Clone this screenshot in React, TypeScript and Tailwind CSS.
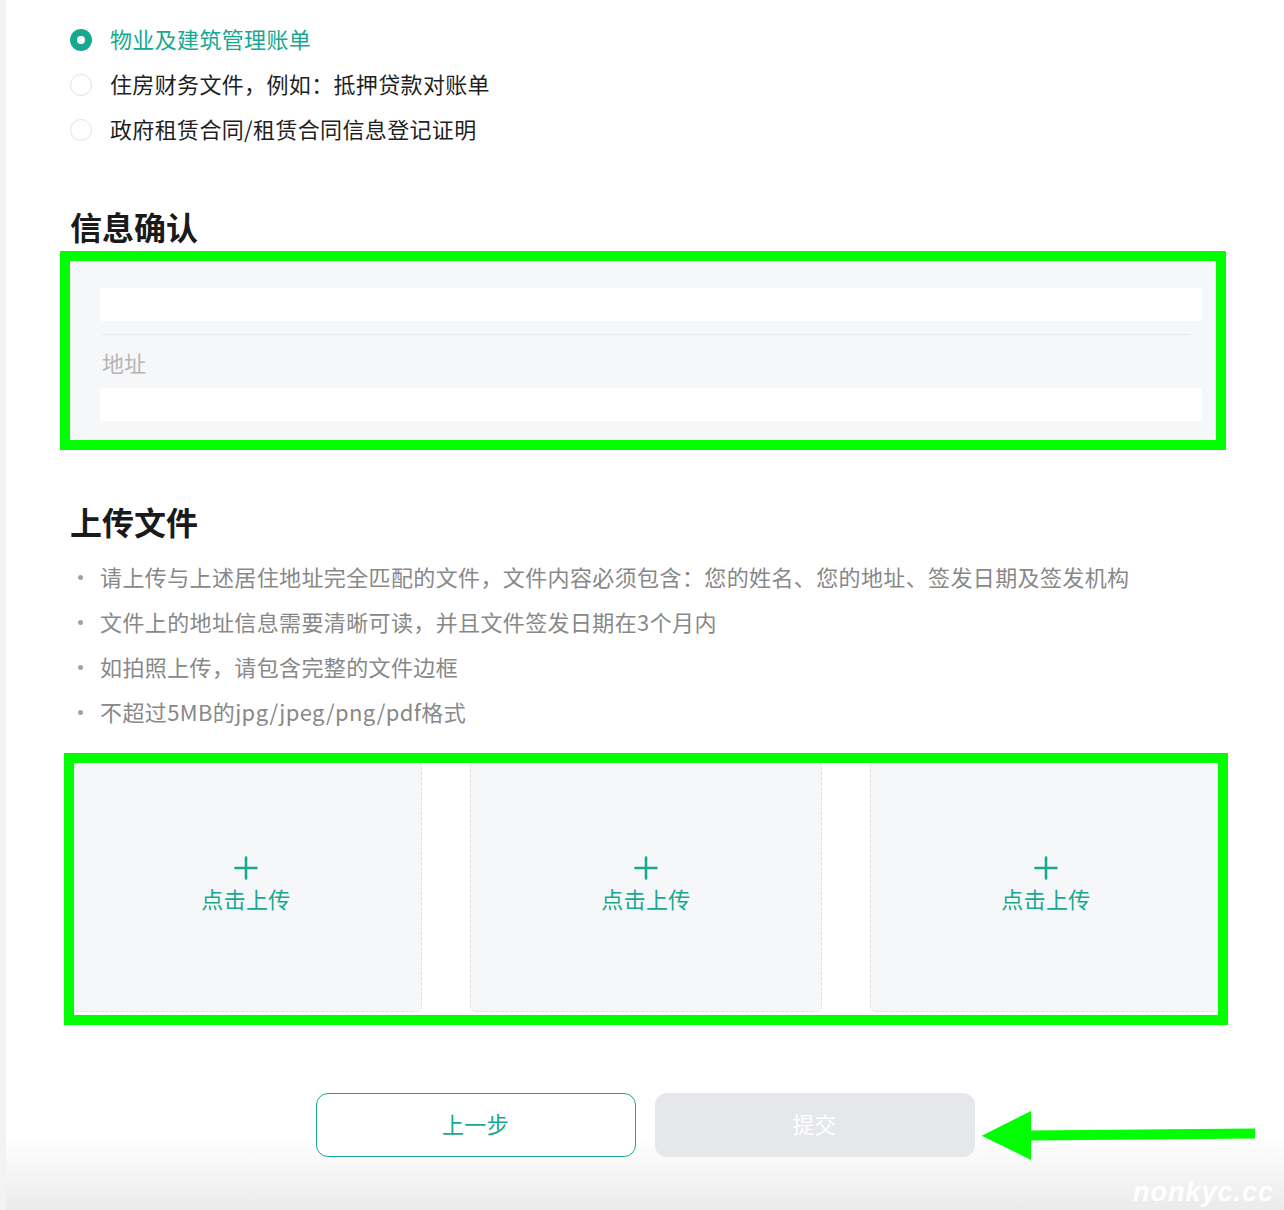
import React from "react";

const TEAL = "#16a891";

function Radio({ checked, label }: { checked?: boolean; label: string }) {
  return (
    <div className="flex h-[45px] items-center">
      {checked ? (
        <div className="flex h-[22px] w-[22px] items-center justify-center rounded-full bg-[#16a891]">
          <div className="h-[8px] w-[8px] rounded-full bg-white" />
        </div>
      ) : (
        <div className="h-[22px] w-[22px] rounded-full border border-[#e3e3e3] bg-white" />
      )}
      <span
        className={
          "ml-[18px] pb-[4px] text-[22px] leading-[30px] tracking-[0.35px] " +
          (checked ? "text-[#16a891]" : "text-[#1f1f1f]")
        }
      >
        {label}
      </span>
    </div>
  );
}

function UploadCard() {
  return (
    <div className="flex h-[252px] flex-col items-center justify-center rounded-[6px] border border-dashed border-[#dfdfdf] bg-[#f6f7f9]">
      <svg width="24" height="24" viewBox="0 0 24 24" fill="none">
        <path d="M12 1.5v21M1.5 12h21" stroke={TEAL} strokeWidth="2.6" strokeLinecap="round" />
      </svg>
      <span className="mt-[3px] pb-[4px] text-[22px] leading-[30px] tracking-[0.35px] text-[#16a891]">
        点击上传
      </span>
    </div>
  );
}

export default function App() {
  const bullets = [
    "请上传与上述居住地址完全匹配的文件，文件内容必须包含：您的姓名、您的地址、签发日期及签发机构",
    "文件上的地址信息需要清晰可读，并且文件签发日期在3个月内",
    "如拍照上传，请包含完整的文件边框",
    "不超过5MB的jpg/jpeg/png/pdf格式",
  ];
  return (
    <div className="flex min-h-[1210px] w-full bg-white font-['Noto_Sans_CJK_SC','Noto_Sans',sans-serif]">
      <div className="w-[6px] shrink-0 bg-[#f2f3f5]" />
      <div className="flex flex-1 flex-col">
        <div className="px-[64px] pt-[17px]">
          <Radio checked label="物业及建筑管理账单" />
          <Radio label="住房财务文件，例如：抵押贷款对账单" />
          <Radio label="政府租赁合同/租赁合同信息登记证明" />

          <h2 className="mt-[55px] h-[42px] pb-[4px] text-[32px] font-bold leading-[38px] text-[#1a1a1a]">
            信息确认
          </h2>

          <div className="-mr-[6px] -ml-[10px] mt-[2px] border-[10px] border-[#00ff00]">
            <div className="rounded-[6px] bg-[#f6f7f9] pb-[19px] pl-[30px] pr-[14px] pt-[27px]">
              <div className="h-[33px] bg-white" />
              <div className="mr-[12px] ml-[2px] mt-[13px] h-px bg-[#e8e9eb]" />
              <div className="ml-[2px] mt-[12px] h-[34px] pb-[4px] text-[22px] leading-[30px] text-[#b5b5b5]">
                地址
              </div>
              <div className="mt-[7px] h-[33px] bg-white" />
            </div>
          </div>

          <h2 className="mt-[52px] h-[42px] pb-[4px] text-[32px] font-bold leading-[38px] text-[#1a1a1a]">
            上传文件
          </h2>

          <ul className="mt-[11px]">
            {bullets.map((b) => (
              <li key={b} className="flex h-[45px] items-center">
                <span className="ml-[8px] h-[5px] w-[5px] rounded-full bg-[#a3a3a3]" />
                <span className="ml-[17px] pb-[4px] text-[22px] leading-[30px] tracking-[0.38px] text-[#888888]">
                  {b}
                </span>
              </li>
            ))}
          </ul>

          <div className="-mr-[8px] -ml-[6px] mt-[18px] border-[10px] border-[#00ff00]">
            <div className="h-[252px] overflow-hidden">
              <div className="-mx-[4px] -mt-[3px] grid grid-cols-3 gap-[48px]">
                <UploadCard />
                <UploadCard />
                <UploadCard />
              </div>
            </div>
          </div>
        </div>

        <div className="relative flex flex-1 justify-center gap-[19px] bg-[linear-gradient(to_bottom,#ffffff_0%,#ffffff_60%,#ebebeb_100%)] pt-[68px]">
          <button className="h-[64px] w-[320px] rounded-[12px] border border-[#16a891] bg-white pb-[4px] text-[22px] tracking-[0.35px] text-[#16a891]">
            上一步
          </button>
          <button className="h-[64px] w-[320px] rounded-[12px] bg-[#e5e7eb] pb-[4px] text-[22px] tracking-[0.35px] text-white">
            提交
          </button>

          <svg
            className="absolute left-[968px] top-[80px]"
            width="290"
            height="60"
            viewBox="0 0 290 60"
          >
            <polygon points="7.7,30.7 57,6 57,55" fill="#00ff00" />
            <polygon points="55,25.5 281,23.5 281,33.5 55,35.5" fill="#00ff00" />
          </svg>

          <span className="absolute right-[10px] bottom-[4px] font-['Liberation_Sans',sans-serif] text-[27px] font-bold italic leading-none tracking-[1px] text-white">
            nonkyc.cc
          </span>
        </div>
      </div>
    </div>
  );
}
